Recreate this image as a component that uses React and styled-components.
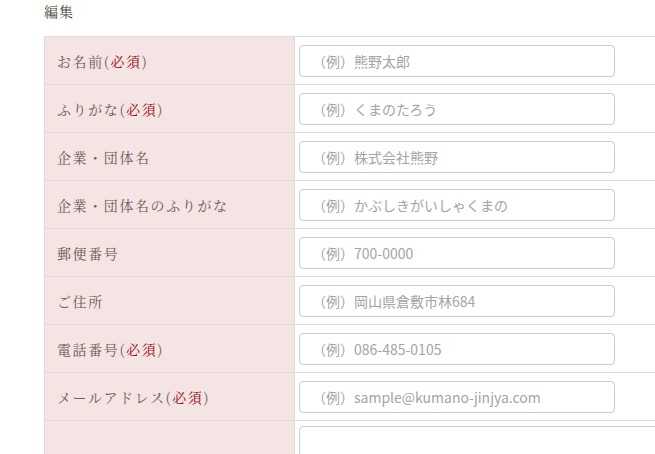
import React from "react";
import styled, { createGlobalStyle } from "styled-components";

const Global = createGlobalStyle`
  html, body { margin: 0; padding: 0; background: #fff; overflow: hidden; }
  body { width: 655px; height: 454px; }
`;

const serif = `"Noto Serif CJK JP", "Liberation Serif", "DejaVu Serif", "Noto Sans CJK JP", serif`;
const sans = `"Noto Sans CJK JP", "Liberation Sans", sans-serif`;

const Page = styled.div`
  padding-left: 44px;
`;

const Heading = styled.h2`
  margin: 0;
  padding-top: 1px;
  height: 35px;
  font-family: ${serif};
  font-weight: normal;
  font-size: 14px;
  line-height: 20px;
  color: #4a3f38;
  letter-spacing: 1px;
`;

const Table = styled.table`
  border-collapse: collapse;
  width: 700px;
`;

const Label = styled.th`
  width: 250px;
  height: 48px;
  box-sizing: border-box;
  padding: 0 0 0 12px;
  background: #f4e4e4;
  border: 1px solid #dcdcdc;
  text-align: left;
  font-family: ${serif};
  font-weight: normal;
  font-size: 14px;
  letter-spacing: 1.6px;
  color: #6b5a50;
  vertical-align: middle;
`;

const Req = styled.span`
  color: #9a0f18;
`;

const Field = styled.td`
  border: 1px solid #dcdcdc;
  padding: ${(p) => (p.$top ? "5px 4px 0" : "0 4px")};
  vertical-align: ${(p) => (p.$top ? "top" : "middle")};
`;

const Input = styled.input`
  display: block;
  box-sizing: border-box;
  width: 316px;
  height: 32px;
  border: 1px solid #cccccc;
  border-radius: 4px;
  padding: 0 12px;
  font-family: ${sans};
  font-size: 14px;
  color: #555;
  background: #fff;
  &::placeholder { color: #a4a4a4; }
`;

const TextArea = styled.textarea`
  display: block;
  box-sizing: border-box;
  width: 420px;
  height: 100px;
  border: 1px solid #cccccc;
  border-radius: 4px;
  resize: none;
`;

const rows = [
  { label: "お名前", req: true, ph: "（例）熊野太郎" },
  { label: "ふりがな", req: true, ph: "（例）くまのたろう" },
  { label: "企業・団体名", ph: "（例）株式会社熊野" },
  { label: "企業・団体名のふりがな", ph: "（例）かぶしきがいしゃくまの" },
  { label: "郵便番号", ph: "（例）700-0000" },
  { label: "ご住所", ph: "（例）岡山県倉敷市林684" },
  { label: "電話番号", req: true, ph: "（例）086-485-0105" },
  { label: "メールアドレス", req: true, ph: "（例）sample@kumano-jinjya.com" },
];

export default function App() {
  return (
    <Page>
      <Global />
      <Heading>編集</Heading>
      <Table>
        <tbody>
          {rows.map((r) => (
            <tr key={r.label}>
              <Label>
                {r.label}
                {r.req && (
                  <>
                    (<Req>必須</Req>)
                  </>
                )}
              </Label>
              <Field>
                <Input placeholder={r.ph} />
              </Field>
            </tr>
          ))}
          <tr>
            <Label />
            <Field $top>
              <TextArea />
            </Field>
          </tr>
        </tbody>
      </Table>
    </Page>
  );
}
